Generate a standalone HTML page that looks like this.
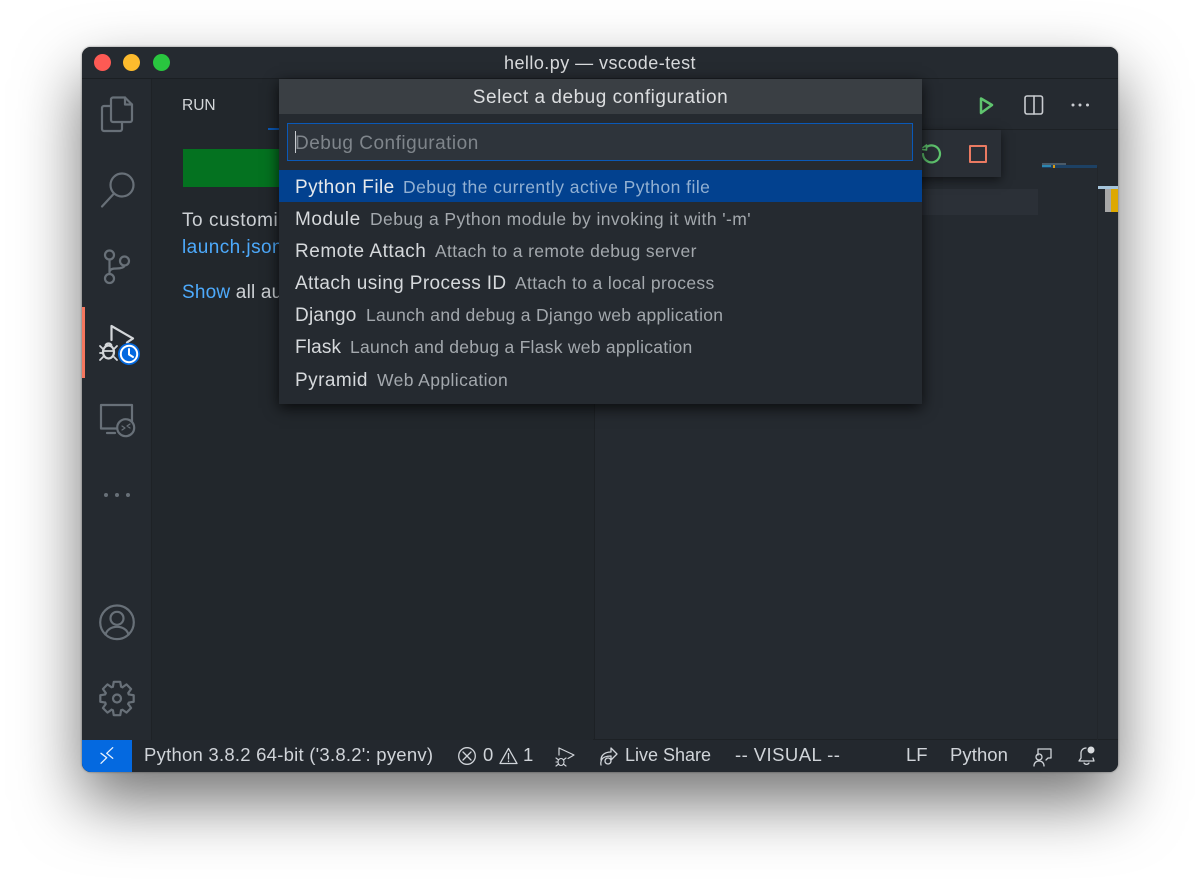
<!DOCTYPE html>
<html>
<head>
<meta charset="utf-8">
<style>
html,body{margin:0;padding:0;background:#fff;}
body{width:1200px;height:889px;overflow:hidden;position:relative;font-family:"Liberation Sans",sans-serif;}
#win{position:absolute;left:82px;top:47px;width:1036px;height:725px;border-radius:9px;background:#22272c;box-shadow:0 30px 64px rgba(0,0,0,.55),0 0 2px rgba(0,0,0,.45);}
#clip{position:absolute;left:82px;top:47px;width:1036px;height:725px;border-radius:9px;overflow:hidden;background:#22272c;}
.a{position:absolute;}
.t{position:absolute;white-space:nowrap;line-height:24px;}
svg{position:absolute;overflow:visible;}
.sb{position:absolute;top:743px;height:24px;line-height:24px;font-size:18.5px;color:#d0d4d9;white-space:nowrap;}
.l{font-size:19px;color:#d6d9dc;}
.d{font-size:17.5px;color:#a3a8ad;}
</style>
</head>
<body>
<div id="win"></div>
<div id="clip">
  <div class="a" style="left:0;top:0;width:1036px;height:31px;background:#252a30;border-bottom:1px solid #1b1f23;"></div>
  <div class="a" style="left:0;top:32px;width:69px;height:661px;background:#252a30;border-right:1px solid #1e2226;"></div>
  <div class="a" style="left:70px;top:32px;width:442px;height:661px;background:#22272c;border-right:1px solid #1d2125;"></div>
  <div class="a" style="left:513px;top:32px;width:523px;height:50px;background:#252a30;border-bottom:1px solid #1d2125;"></div>
  <div class="a" style="left:513px;top:83px;width:523px;height:610px;background:#252a30;"></div>
  <div class="a" style="left:513px;top:142px;width:443px;height:26px;background:#2b3037;"></div>
  <div class="a" style="left:0;top:260px;width:3px;height:71px;background:#f5775f;"></div>
  <div class="a" style="left:101px;top:102px;width:320px;height:38px;background:#047220;"></div>
  <div class="a" style="left:186px;top:81px;width:20px;height:2px;background:#0a59b8;"></div>
  <div class="a" style="left:0;top:693px;width:1036px;height:32px;background:#23282e;"></div>
  <div class="a" style="left:0;top:693px;width:50px;height:32px;background:#0469e0;"></div>
  <div class="a" style="left:511px;top:692px;width:525px;height:1px;background:#1d2125;"></div>
  <!-- minimap -->
  <div class="a" style="left:960px;top:118px;width:55px;height:3px;background:#1d4164;"></div>
  <div class="a" style="left:960px;top:118px;width:9px;height:2px;background:#2c86b0;"></div>
  <div class="a" style="left:971px;top:118px;width:2px;height:3px;background:#d99a10;"></div>
  <div class="a" style="left:960px;top:116px;width:24px;height:2px;background:#4a5a68;"></div>
  <div class="a" style="left:1016px;top:139px;width:20px;height:3px;background:#a5c4da;"></div>
  <div class="a" style="left:1023px;top:142px;width:7px;height:23px;background:#a8a8a8;"></div>
  <div class="a" style="left:1029px;top:142px;width:7px;height:23px;background:#dda800;"></div>
  <div class="a" style="left:1015px;top:120px;width:1px;height:573px;background:#22262b;"></div>
</div>

<!-- traffic lights -->
<div class="a" style="left:94px;top:54px;width:17px;height:17px;border-radius:50%;background:#fd5a54;"></div>
<div class="a" style="left:123px;top:54px;width:17px;height:17px;border-radius:50%;background:#fdbb2d;"></div>
<div class="a" style="left:153px;top:54px;width:17px;height:17px;border-radius:50%;background:#29c63f;"></div>
<div class="t" style="left:400px;width:400px;top:51px;text-align:center;font-size:18px;letter-spacing:.45px;color:#d8dadc;">hello.py — vscode-test</div>

<!-- activity icons -->
<svg width="1200" height="889" style="left:0;top:0;" fill="none" stroke-linejoin="round" stroke-linecap="round">
  <g stroke="#687078" stroke-width="2.2">
    <path d="M113 97.500h12l7 7v15.500a2 2 0 0 1-2 2h-17a2 2 0 0 1-2-2v-20.500a2 2 0 0 1 2-2z"/>
    <path d="M125 97.500v7h7"/>
    <path d="M111 106h-7a2 2 0 0 0-2 2v21a2 2 0 0 0 2 2h16a2 2 0 0 0 2-2v-7"/>
    <circle cx="122" cy="185" r="11.500"/>
    <path d="M114 193.500l-12 13"/>
    <circle cx="109.500" cy="255" r="4.500"/>
    <circle cx="109.500" cy="278.500" r="4.500"/>
    <circle cx="124.500" cy="261" r="4.500"/>
    <path d="M109.500 259.500v14.500M109.500 272c0-3 3-3.500 7-3.500 5 0 8-1.500 8-3"/>
    <path d="M132 429v-24h-31v23.500h22M107 433h8"/>
    <circle cx="125.700" cy="427.700" r="8.500" fill="#252a30"/>
    <path d="M122 426l3 2-3 2M130 424l-3 2 3 2" stroke-width="1.200"/>
    <circle cx="117" cy="622.300" r="16.800"/>
    <circle cx="117" cy="618.300" r="6.500"/>
    <path d="M105.500 634.500c1.500-5 6-7.700 11.500-7.700s10 2.700 11.500 7.700"/>
    <circle cx="117" cy="698.500" r="4"/>
    <path d="M112.930 686.680L113.760 681.810H120.240L121.070 686.680L122.480 687.270"/>
    <path transform="rotate(45 117 698.500)" d="M112.930 686.680L113.760 681.810H120.240L121.070 686.680L122.480 687.270"/>
    <path transform="rotate(90 117 698.500)" d="M112.930 686.680L113.760 681.810H120.240L121.070 686.680L122.480 687.270"/>
    <path transform="rotate(135 117 698.500)" d="M112.930 686.680L113.760 681.810H120.240L121.070 686.680L122.480 687.270"/>
    <path transform="rotate(180 117 698.500)" d="M112.930 686.680L113.760 681.810H120.240L121.070 686.680L122.480 687.270"/>
    <path transform="rotate(225 117 698.500)" d="M112.930 686.680L113.760 681.810H120.240L121.070 686.680L122.480 687.270"/>
    <path transform="rotate(270 117 698.500)" d="M112.930 686.680L113.760 681.810H120.240L121.070 686.680L122.480 687.270"/>
    <path transform="rotate(315 117 698.500)" d="M112.930 686.680L113.760 681.810H120.240L121.070 686.680L122.480 687.270"/>
  </g>
  <g fill="#687078"><circle cx="106" cy="495" r="2"/><circle cx="117" cy="495" r="2"/><circle cx="128" cy="495" r="2"/></g>
  <!-- run icon -->
  <g stroke="#d4d7da" stroke-width="2.200">
    <path d="M111.500 340v-14l21.500 12.500-6 4"/>
    <ellipse cx="108.500" cy="352" rx="5.500" ry="6.500"/>
    <path d="M100 346l3 3M100 353h3M100 360l3-3M117 346l-3 3M117 360l-3-3M104 351h9M105.500 345a3.500 3.500 0 0 1 6 0" stroke-width="1.800"/>
  </g>
  <circle cx="129" cy="354" r="11" fill="#0469e0"/>
  <circle cx="129" cy="354" r="8.200" stroke="#fff" stroke-width="2"/>
  <path d="M129 349v5.500l4 2.500" stroke="#fff" stroke-width="2"/>
  <!-- editor actions -->
  <path d="M981 98.500l11 6.500-11 8z" stroke="#5fc46e" stroke-width="2.500"/>
  <rect x="1025" y="96" width="17.500" height="18" rx="2" stroke="#c9ccd0" stroke-width="1.600"/>
  <path d="M1034 96v18" stroke="#c9ccd0" stroke-width="1.600"/>
  <g fill="#c9ccd0"><circle cx="1073" cy="105" r="1.500"/><circle cx="1080" cy="105" r="1.500"/><circle cx="1087.500" cy="105" r="1.500"/></g>
</svg>

<div class="t" style="left:182px;top:94px;font-size:15.5px;color:#d4d7da;">RUN</div>
<div class="t" style="left:182px;top:209px;font-size:19px;letter-spacing:.55px;color:#ccd0d4;">To customize</div>
<div class="t" style="left:182px;top:236px;font-size:19px;letter-spacing:.45px;color:#4daafc;">launch.json</div>
<div class="t" style="left:182px;top:281px;font-size:19px;letter-spacing:.2px;color:#ccd0d4;"><span style="color:#4daafc;">Show</span> all automatic</div>

<!-- debug toolbar -->
<div class="a" style="left:900px;top:130px;width:101px;height:47px;background:#2a2f36;box-shadow:0 3px 10px rgba(0,0,0,.55);"></div>
<svg width="1200" height="889" style="left:0;top:0;" fill="none" stroke-linecap="round" stroke-linejoin="round">
  <path d="M926.500 147a8.500 8.500 0 1 1-3.500 7" stroke="#5fc46e" stroke-width="2.200"/>
  <path d="M923 147.500l3.500-2.500v5l-4.500-.5" stroke="#5fc46e" stroke-width="1.600"/>
  <rect x="970" y="146" width="16" height="16" stroke="#ea7a62" stroke-width="2"/>
</svg>

<!-- quick pick -->
<div class="a" style="left:279px;top:79px;width:643px;height:325px;background:#252a30;box-shadow:0 4px 14px rgba(0,0,0,.75);"></div>
<div class="a" style="left:279px;top:79px;width:643px;height:35px;background:#3a3f44;"></div>
<div class="t" style="left:279px;width:643px;top:86px;text-align:center;font-size:19px;letter-spacing:.52px;color:#dcdee0;">Select a debug configuration</div>
<div class="a" style="left:287px;top:123px;width:624px;height:36px;background:#2e343b;border:1px solid #0a59b8;"></div>
<div class="a" style="left:295px;top:131px;width:1px;height:22px;background:#c9ccd0;"></div>
<div class="t" style="left:295px;top:132px;font-size:19px;letter-spacing:.5px;color:#7f858b;">Debug Configuration</div>
<div class="a" style="left:279px;top:170px;width:643px;height:32px;background:#02418f;"></div>

<div class="t l" style="left:295px;top:176px;color:#e6e9ec;letter-spacing:.41px;">Python File</div>
<div class="t d" style="left:403px;top:175px;color:#92b0d2;letter-spacing:.46px;">Debug the currently active Python file</div>
<div class="t l" style="left:295px;top:208px;letter-spacing:.57px;">Module</div>
<div class="t d" style="left:370px;top:207px;letter-spacing:.42px;">Debug a Python module by invoking it with '-m'</div>
<div class="t l" style="left:295px;top:240px;letter-spacing:.52px;">Remote Attach</div>
<div class="t d" style="left:435px;top:239px;letter-spacing:.38px;">Attach to a remote debug server</div>
<div class="t l" style="left:295px;top:272px;letter-spacing:.38px;">Attach using Process ID</div>
<div class="t d" style="left:515px;top:271px;letter-spacing:.36px;">Attach to a local process</div>
<div class="t l" style="left:295px;top:304px;letter-spacing:.23px;">Django</div>
<div class="t d" style="left:366px;top:303px;letter-spacing:.29px;">Launch and debug a Django web application</div>
<div class="t l" style="left:295px;top:336px;letter-spacing:.16px;">Flask</div>
<div class="t d" style="left:350px;top:335px;letter-spacing:.27px;">Launch and debug a Flask web application</div>
<div class="t l" style="left:295px;top:369px;letter-spacing:.46px;">Pyramid</div>
<div class="t d" style="left:377px;top:368px;letter-spacing:.4px;">Web Application</div>

<!-- status bar -->
<svg width="1200" height="889" style="left:0;top:0;" fill="none" stroke-linecap="round" stroke-linejoin="round">
  <path d="M101 753.300l5.700 4.400-5.700 5.600M112.700 747.700l-6 5.600 6 5" stroke="#e8f1fc" stroke-width="1.300"/>
  <g stroke="#d0d4d9" stroke-width="1.300">
    <circle cx="467" cy="756" r="8.300"/>
    <path d="M463 752l8 8M471 752l-8 8"/>
    <path d="M508.500 748.500l8.500 15h-17zM508.500 753.500v5.500M508.500 761v.5"/>
    <path d="M559 755v-7l15 7-6 3.500" stroke-width="1.200"/>
    <ellipse cx="561" cy="762" rx="3" ry="3.500" stroke-width="1.100"/>
    <path d="M556 758l2 1.500M556 762h2M556 766l2-1.500M566 758l-2 1.500M566 766l-2-1.500" stroke-width="1.100"/>
    <path d="M611 752v-4l6 6-6 6v-4c-5 0-8 1-10 4 0-5 4-8 10-8z"/>
    <circle cx="608" cy="761" r="3"/>
    <path d="M601 765a8 8 0 0 1 1-6"/>
    <path d="M1038 755v-6h13v9h-3l-2 2"/>
    <circle cx="1039" cy="757" r="3"/>
    <path d="M1034 766c0-3 2-5 5-5s5 2 5 5"/>
    <path d="M1086 748a5 5 0 0 0-5 5v5l-2 3h15l-1-3"/>
    <path d="M1084 763a3 3 0 0 0 5 0"/>
  </g>
  <circle cx="1091" cy="750" r="3.500" fill="#d8dbde"/>
</svg>
<div class="sb" style="left:144px;letter-spacing:.24px;">Python 3.8.2 64-bit ('3.8.2': pyenv)</div>
<div class="sb" style="left:483px;">0</div>
<div class="sb" style="left:523px;">1</div>
<div class="sb" style="left:625px;font-size:18px;">Live Share</div>
<div class="sb" style="left:735px;letter-spacing:.44px;">-- VISUAL --</div>
<div class="sb" style="left:906px;">LF</div>
<div class="sb" style="left:950px;letter-spacing:.07px;">Python</div>
</body>
</html>
